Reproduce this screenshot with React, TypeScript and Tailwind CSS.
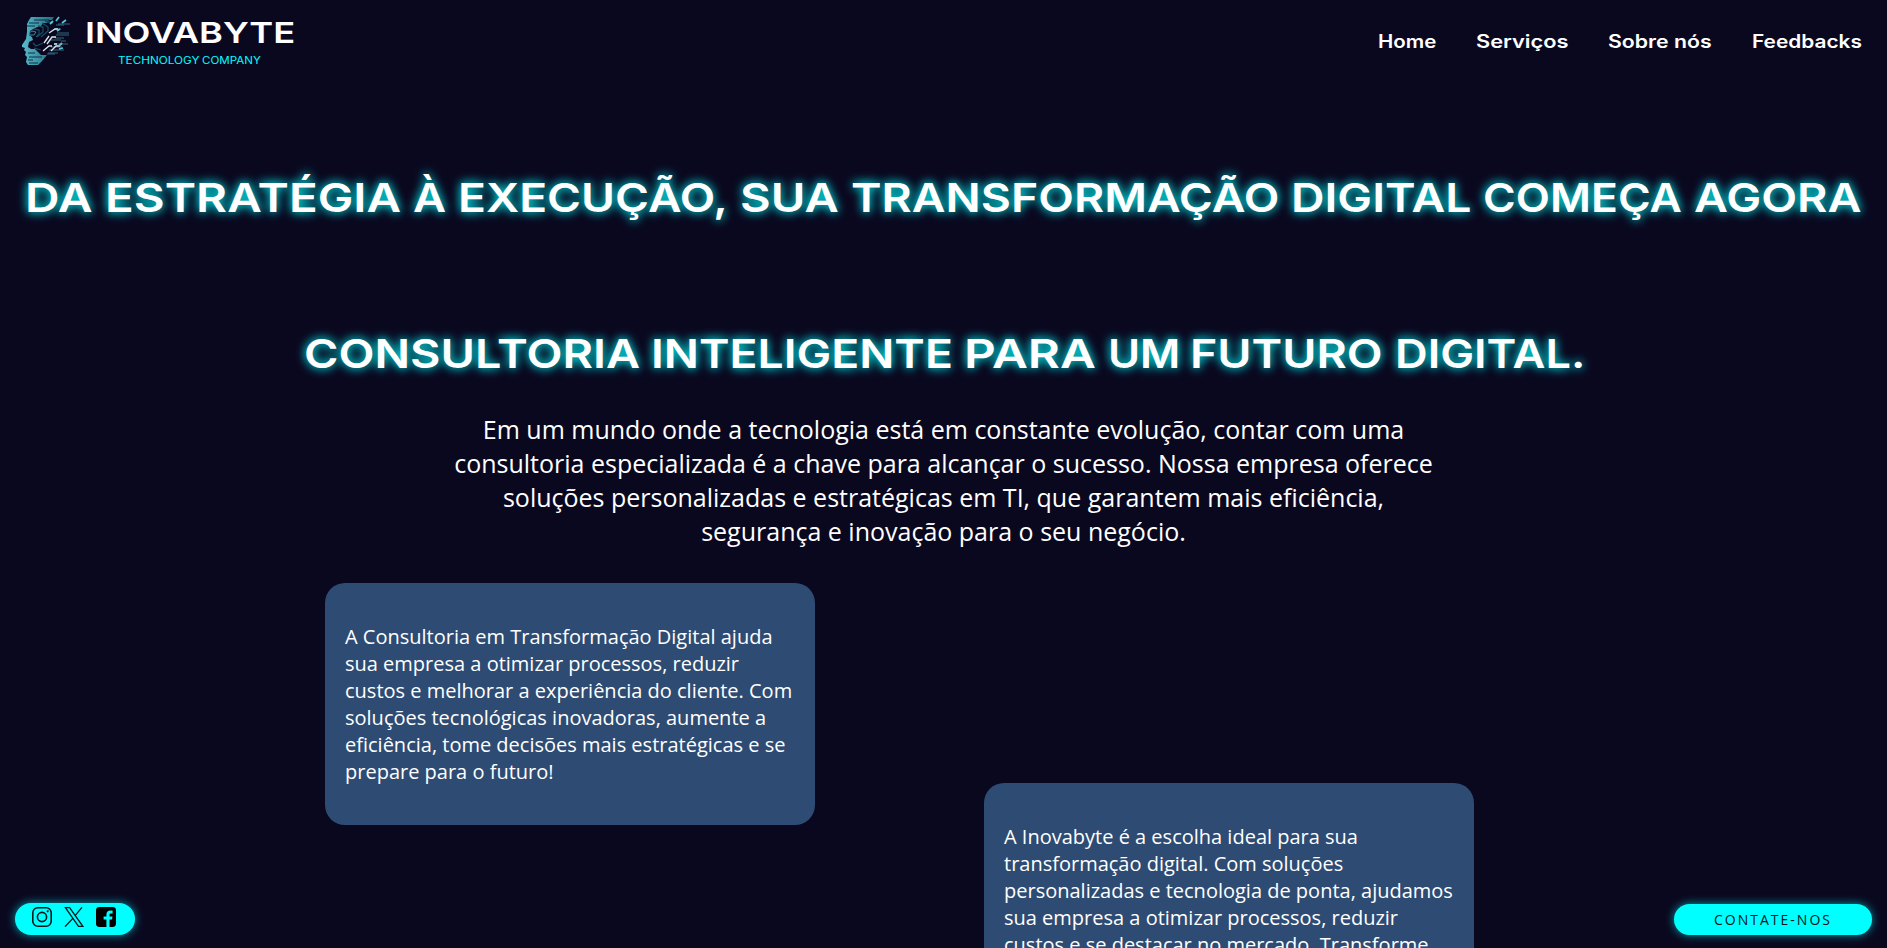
import { useLayoutEffect, useRef, useState } from 'react';

type Word = { text: string; box: string };

/** Stretches a word horizontally so that it fills the width of its box. */
function Fit({ text, box }: Word) {
  const ref = useRef<HTMLSpanElement>(null);
  const [scale, setScale] = useState(1);
  useLayoutEffect(() => {
    const el = ref.current;
    if (el && el.parentElement) {
      setScale(el.parentElement.clientWidth / el.offsetWidth);
    }
  }, [text]);
  return (
    <span className={`block shrink-0 ${box}`}>
      <span
        ref={ref}
        className="inline-block origin-left whitespace-nowrap"
        style={{ transform: `scaleX(${scale})` }}
      >
        {text}
      </span>
    </span>
  );
}

const headline: Word[] = [
  { text: 'DA', box: 'w-[67px]' },
  { text: 'ESTRATÉGIA', box: 'ml-[13px] w-[296px]' },
  { text: 'À', box: 'ml-[12px] w-[33px]' },
  { text: 'EXECUÇÃO,', box: 'ml-[12px] w-[270px]' },
  { text: 'SUA', box: 'ml-[12px] w-[99px]' },
  { text: 'TRANSFORMAÇÃO', box: 'ml-[12px] w-[429px]' },
  { text: 'DIGITAL', box: 'ml-[11px] w-[181px]' },
  { text: 'COMEÇA', box: 'ml-[11px] w-[199px]' },
  { text: 'AGORA', box: 'ml-[12px] w-[167px]' },
];

const subline: Word[] = [
  { text: 'CONSULTORIA', box: 'w-[336px]' },
  { text: 'INTELIGENTE', box: 'ml-[11px] w-[302px]' },
  { text: 'PARA', box: 'ml-[11px] w-[132px]' },
  { text: 'UM', box: 'ml-[12px] w-[72px]' },
  { text: 'FUTURO', box: 'ml-[10px] w-[193px]' },
  { text: 'DIGITAL.', box: 'ml-[12px] w-[190px]' },
];

const nav: Word[] = [
  { text: 'Home', box: 'w-[58px]' },
  { text: 'Serviços', box: 'w-[92px]' },
  { text: 'Sobre nós', box: 'w-[104px]' },
  { text: 'Feedbacks', box: 'w-[110px]' },
];

function FaceLogo() {
  return (
    <svg className="h-[52px] w-[50px] shrink-0" viewBox="0 0 50 52" fill="none">
      <defs>
        <linearGradient id="skin" x1="0" y1="0" x2="1" y2="0">
          <stop offset="0" stopColor="#58bccb" />
          <stop offset="1" stopColor="#1f6b80" />
        </linearGradient>
      </defs>
      <path
        d="M10 2H33L31 5H28L26 8H22L20 11L14 13L9 16L8 20L11 22L12 25L8 27L7 32L10 34H14L17 37L20 40H26L22 45L17 50H7L5 47L6 42L4 40L5 37L3 35L4 33L1 32V30L5 24L6 17V9L8 5Z"
        fill="url(#skin)"
      />
      <path
        d="M13 5H28M8 8H18M6 11H14M7 38H14M8 42H21M7 45H12M8 48H17"
        stroke="#0b2238"
        strokeWidth="0.9"
      />
      <path d="M8 18L11 16L15 17L13 20L9 20Z" fill="#0a1226" stroke="#4aa5b7" strokeWidth="0.8" />
      <path
        d="M17 11L22 12V17L16 22M13 14L18 15V19L15 22M21 8L27 12V16L20 22M12 28L15 31L22 28M13 33L20 35M24 6L32 8"
        stroke="#174d63"
        strokeWidth="1.3"
      />
      <path
        d="M35 10H43M37 9H49M33 14H40M36 18H48M35 20H48M34 23H43M29 25H40M33 29H47M30 32H41M28 35H43M27 38H37M40 26H45M26 39H34"
        stroke="#367489"
        strokeWidth="0.9"
      />
      <path
        d="M28 18L34 14H37M23 28L28 21M26 29L31 22H35M22 36L28 31H31M33 29H36M30 36L35 31H39"
        stroke="#dbe8ee"
        strokeWidth="1.3"
      />
      <path d="M35 6L38 2M29 9L32 6M41 8L45 5M36 16L39 14M38 31L41 28M38 34L42 33" stroke="#5bc4d3" strokeWidth="1.8" />
    </svg>
  );
}

function InstagramIcon() {
  return (
    <svg className="size-5" viewBox="0 0 20 20" fill="none" stroke="#00181c">
      <rect x="0.8" y="0.8" width="18.4" height="18.4" rx="5" strokeWidth="1.6" />
      <circle cx="10" cy="10" r="4.6" strokeWidth="1.6" />
      <circle cx="15.7" cy="4.3" r="1.1" fill="#00181c" stroke="none" />
    </svg>
  );
}

function XIcon() {
  return (
    <svg className="size-5" viewBox="0 0 20 20" fill="none" stroke="#00181c" strokeWidth="1.3">
      <path d="M1.4 0.7H5.6L18.8 19.3H14.5ZM18 0.4L11.1 8.6M8.9 11.4L1 19.7" />
    </svg>
  );
}

function FacebookIcon() {
  return (
    <svg className="size-5" viewBox="0 0 20 20">
      <rect width="20" height="20" rx="3.4" fill="#000" />
      <path
        d="M10.4 20V12.6H7.6V9.4H10.4V7.4C10.4 4.7 12 3.4 14.3 3.4C15.4 3.4 16.2 3.5 16.6 3.6V6.4H14.9C13.7 6.4 13.5 7 13.5 7.9V9.4H16.5L16 12.6H13.5V20Z"
        fill="#00ffff"
      />
    </svg>
  );
}

const glow = '[text-shadow:0_0_10px_#00ffff,0_0_8px_rgba(0,255,255,0.25)]';

export default function App() {
  return (
    <div className="relative h-[948px] overflow-hidden bg-[#0a081f] font-['Open_Sans',sans-serif] text-white">
      <header className="flex h-[82px] items-start justify-between pl-[21px] pr-[25px] font-['Inter',sans-serif]">
        <div className="flex pt-[15px]">
          <FaceLogo />
          <div className="flex flex-col pl-[14px]">
            <div className="flex h-[36px] text-[29px] font-semibold leading-[36px]">
              <Fit text="INOVABYTE" box="w-[210px]" />
            </div>
            <div className="flex pl-[33px] text-[10px] leading-[18px] text-[#00ffff]">
              <Fit text="TECHNOLOGY" box="w-[81px]" />
              <Fit text="COMPANY" box="ml-[3px] w-[59px]" />
            </div>
          </div>
        </div>
        <nav className="flex gap-[40px] pt-[28px] text-[18px] font-semibold leading-[27px]">
          {nav.map((item) => (
            <a key={item.text} href="#">
              <Fit text={item.text} box={item.box} />
            </a>
          ))}
        </nav>
      </header>

      <h1
        className={`flex pl-[25px] pt-[91px] font-['Inter',sans-serif] text-[40px] font-semibold leading-[50px] ${glow}`}
      >
        {headline.map((word) => (
          <Fit key={word.text} text={word.text} box={word.box} />
        ))}
      </h1>
      <h2
        className={`flex pl-[304px] pt-[106px] font-['Inter',sans-serif] text-[40px] font-semibold leading-[50px] ${glow}`}
      >
        {subline.map((word) => (
          <Fit key={word.text} text={word.text} box={word.box} />
        ))}
      </h2>

      <p className="mx-auto mt-[33px] w-[1000px] text-center text-[25px] leading-[34px]">
        Em um mundo onde a tecnologia está em constante evolução, contar com uma
        <br />
        consultoria especializada é a chave para alcançar o sucesso. Nossa empresa oferece
        <br />
        soluções personalizadas e estratégicas em TI, que garantem mais eficiência,
        <br />
        segurança e inovação para o seu negócio.
      </p>

      <section className="mt-[35px] flex items-start gap-[169px] pl-[325px] text-[20px] leading-[27px]">
        <article className="h-[242px] w-[490px] shrink-0 rounded-[20px] bg-[#2e4c73] px-[20px] py-[40px]">
          A Consultoria em Transformação Digital ajuda
          <br />
          sua empresa a otimizar processos, reduzir
          <br />
          custos e melhorar a experiência do cliente. Com
          <br />
          soluções tecnológicas inovadoras, aumente a
          <br />
          eficiência, tome decisões mais estratégicas e se
          <br />
          prepare para o futuro!
        </article>
        <article className="mt-[200px] h-[242px] w-[490px] shrink-0 rounded-[20px] bg-[#2e4c73] px-[20px] py-[40px]">
          A Inovabyte é a escolha ideal para sua
          <br />
          transformação digital. Com soluções
          <br />
          personalizadas e tecnologia de ponta, ajudamos
          <br />
          sua empresa a otimizar processos, reduzir
          <br />
          custos e se destacar no mercado. Transforme
        </article>
      </section>

      <div className="absolute bottom-[13px] left-[15px] flex h-[32px] w-[120px] items-start gap-[12px] rounded-full bg-[#00ffff] pl-[17px] pt-[4px] shadow-[0_0_10px_rgba(0,255,255,0.6)]">
        <InstagramIcon />
        <XIcon />
        <FacebookIcon />
      </div>
      <button className="absolute bottom-[13px] right-[15px] h-[31px] w-[198px] rounded-full bg-[#00ffff] text-[14px] leading-[31px] tracking-[2px] text-[#001a1c] shadow-[0_0_10px_rgba(0,255,255,0.6)]">
        CONTATE-NOS
      </button>
    </div>
  );
}
